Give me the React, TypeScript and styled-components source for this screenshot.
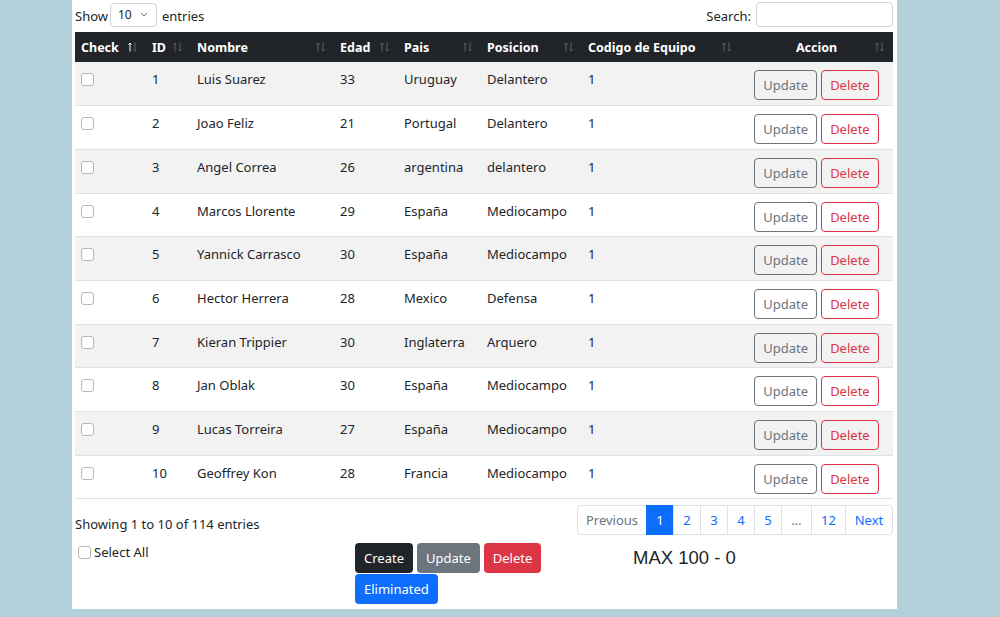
import React from "react";
import styled, { createGlobalStyle } from "styled-components";

const GlobalStyle = createGlobalStyle`
  html, body { margin: 0; padding: 0; }
  body {
    background: #b2d0da;
    font-family: "Noto Sans", "DejaVu Sans", sans-serif;
    color: #212529;
    font-size: 13px;
  }
  * { box-sizing: border-box; }
`;

const Page = styled.div`
  width: 825px;
  margin-left: 72px;
  background: #fff;
  padding: 0 4px 5px 3px;
`;

const TopBar = styled.div`
  height: 32px;
  display: flex;
  align-items: center;
  justify-content: space-between;
`;

const Label = styled.label`
  display: flex;
  align-items: center;
  gap: 4px;
`;

const SelectBox = styled.div`
  width: 47px;
  height: 24px;
  border: 1px solid #ced4da;
  border-radius: 4px;
  display: flex;
  align-items: center;
  padding-left: 7px;
  gap: 8px;
  font-size: 12px;
  margin-top: -3px;
  margin-left: -2px;
  margin-right: 1px;
`;

const SearchInput = styled.input`
  width: 137px;
  height: 25px;
  border: 1px solid #ced4da;
  border-radius: 4px;
  margin-top: -3px;
  margin-left: 1px;
`;

const Table = styled.table`
  width: 818px;
  border-collapse: collapse;
  table-layout: fixed;
`;

const Th = styled.th<{ $center?: boolean }>`
  position: relative;
  background: #212529;
  color: #fff;
  height: 30px;
  padding: 0 6px;
  text-align: ${(p) => (p.$center ? "center" : "left")};
  font-weight: 700;
  font-size: 12.5px;
`;

const SortIcon = styled.svg`
  position: absolute;
  right: 9px;
  top: 50%;
  transform: translateY(-50%);
`;

const Tr = styled.tr<{ $odd: boolean }>`
  height: 43.7px;
  background: ${(p) => (p.$odd ? "#f2f2f2" : "#fff")};
  border-bottom: 1px solid #dee2e6;
`;

const Td = styled.td<{ $center?: boolean }>`
  padding: 8px 6px 4px;
  vertical-align: top;
  text-align: ${(p) => (p.$center ? "center" : "left")};
  line-height: 18px;
`;

const Check = styled.input`
  appearance: none;
  -webkit-appearance: none;
  display: block;
  margin: 3px 0 0 0;
  width: 13px;
  height: 13px;
  border: 1px solid #b8b8b8;
  border-radius: 3px;
  background: #fff;
`;

const OutlineBtn = styled.button<{ $variant: "secondary" | "danger" }>`
  font-family: inherit;
  font-size: 13px;
  height: 30px;
  padding: 0 8px;
  border-radius: 4px;
  background: transparent;
  border: 1px solid ${(p) => (p.$variant === "danger" ? "#dc3545" : "#6c757d")};
  color: ${(p) => (p.$variant === "danger" ? "#dc3545" : "#6c757d")};
  margin: 0 2px;
`;

const Footer = styled.div`
  display: flex;
  justify-content: space-between;
  align-items: flex-start;
  margin-top: 6px;
`;

const Info = styled.div`
  padding-top: 10px;
  line-height: 18px;
`;

const Pagination = styled.div`
  display: flex;
  height: 30px;
`;

const PageItem = styled.div<{ $active?: boolean; $muted?: boolean; $w: number }>`
  width: ${(p) => p.$w}px;
  height: 30px;
  display: flex;
  align-items: center;
  justify-content: center;
  border: 1px solid #dee2e6;
  margin-left: -1px;
  color: ${(p) => (p.$active ? "#fff" : p.$muted ? "#6c757d" : "#0d6efd")};
  background: ${(p) => (p.$active ? "#0d6efd" : "#fff")};
  border-color: ${(p) => (p.$active ? "#0d6efd" : "#dee2e6")};
  &:first-child { border-radius: 4px 0 0 4px; margin-left: 0; }
  &:last-child { border-radius: 0 4px 4px 0; }
`;

const BottomGrid = styled.div`
  display: grid;
  grid-template-columns: 273px 272px 273px;
  align-items: start;
  margin-top: 8px;
`;

const SelectAll = styled.label`
  display: flex;
  align-items: center;
  gap: 3px;
  padding-left: 3px;
  input { margin: 0; }
`;

const ButtonGroup = styled.div`
  display: flex;
  flex-wrap: wrap;
  column-gap: 4px;
  row-gap: 1px;
  padding-left: 7px;
  padding-right: 7px;
`;

const SolidBtn = styled.button<{ $bg: string }>`
  font-family: inherit;
  font-size: 13px;
  height: 30px;
  padding: 0 9px;
  border: none;
  border-radius: 4px;
  color: #fff;
  background: ${(p) => p.$bg};
`;

const MaxText = styled.div`
  font-family: "Liberation Sans", Arial, sans-serif;
  font-size: 18.5px;
  padding-left: 13px;
  padding-top: 4px;
`;

const players = [
  [1, "Luis Suarez", 33, "Uruguay", "Delantero"],
  [2, "Joao Feliz", 21, "Portugal", "Delantero"],
  [3, "Angel Correa", 26, "argentina", "delantero"],
  [4, "Marcos Llorente", 29, "España", "Mediocampo"],
  [5, "Yannick Carrasco", 30, "España", "Mediocampo"],
  [6, "Hector Herrera", 28, "Mexico", "Defensa"],
  [7, "Kieran Trippier", 30, "Inglaterra", "Arquero"],
  [8, "Jan Oblak", 30, "España", "Mediocampo"],
  [9, "Lucas Torreira", 27, "España", "Mediocampo"],
  [10, "Geoffrey Kon", 28, "Francia", "Mediocampo"],
] as const;

const columns = [
  { name: "Check", w: 71 },
  { name: "ID", w: 45 },
  { name: "Nombre", w: 143 },
  { name: "Edad", w: 64 },
  { name: "Pais", w: 83 },
  { name: "Posicion", w: 101 },
  { name: "Codigo de Equipo", w: 158 },
  { name: "Accion", w: 153, center: true },
];

function SortArrows({ active }: { active?: boolean }) {
  const dim = "#5c6166";
  return (
    <SortIcon width="9" height="11" viewBox="0 0 9 11" fill="none" strokeWidth="1">
      <path d="M2 1.5V10M0.5 3L2 1.5L3.5 3" stroke={active ? "#ffffff" : dim} />
      <path d="M7 1V9.5M5.5 8L7 9.5L8.5 8" stroke={dim} />
    </SortIcon>
  );
}

export default function App() {
  return (
    <>
      <GlobalStyle />
      <Page>
        <TopBar>
          <Label>
            Show
            <SelectBox>
              10
              <svg width="8" height="5" viewBox="0 0 8 5">
                <path d="M1 1l3 3 3-3" stroke="#6c757d" fill="none" strokeWidth="1" />
              </svg>
            </SelectBox>
            entries
          </Label>
          <Label>
            Search:
            <SearchInput />
          </Label>
        </TopBar>
        <Table>
          <colgroup>
            {columns.map((c) => (
              <col key={c.name} style={{ width: c.w }} />
            ))}
          </colgroup>
          <thead>
            <tr>
              {columns.map((c, i) => (
                <Th key={c.name} $center={c.center}>
                  {c.name}
                  <SortArrows active={i === 0} />
                </Th>
              ))}
            </tr>
          </thead>
          <tbody>
            {players.map((p, i) => (
              <Tr key={p[0]} $odd={i % 2 === 0}>
                <Td>
                  <Check type="checkbox" />
                </Td>
                <Td>{p[0]}</Td>
                <Td>{p[1]}</Td>
                <Td>{p[2]}</Td>
                <Td>{p[3]}</Td>
                <Td>{p[4]}</Td>
                <Td>1</Td>
                <Td $center>
                  <OutlineBtn $variant="secondary">Update</OutlineBtn>
                  <OutlineBtn $variant="danger">Delete</OutlineBtn>
                </Td>
              </Tr>
            ))}
          </tbody>
        </Table>
        <Footer>
          <Info>Showing 1 to 10 of 114 entries</Info>
          <Pagination>
            <PageItem $muted $w={70}>Previous</PageItem>
            <PageItem $active $w={28}>1</PageItem>
            <PageItem $w={28}>2</PageItem>
            <PageItem $w={28}>3</PageItem>
            <PageItem $w={28}>4</PageItem>
            <PageItem $w={28}>5</PageItem>
            <PageItem $muted $w={31}>…</PageItem>
            <PageItem $w={35}>12</PageItem>
            <PageItem $w={48}>Next</PageItem>
          </Pagination>
        </Footer>
        <BottomGrid>
          <SelectAll>
            <Check type="checkbox" />
            Select All
          </SelectAll>
          <ButtonGroup>
            <SolidBtn $bg="#212529">Create</SolidBtn>
            <SolidBtn $bg="#6c757d">Update</SolidBtn>
            <SolidBtn $bg="#dc3545">Delete</SolidBtn>
            <SolidBtn $bg="#0d6efd">Eliminated</SolidBtn>
          </ButtonGroup>
          <MaxText>MAX 100 - 0</MaxText>
        </BottomGrid>
      </Page>
    </>
  );
}
